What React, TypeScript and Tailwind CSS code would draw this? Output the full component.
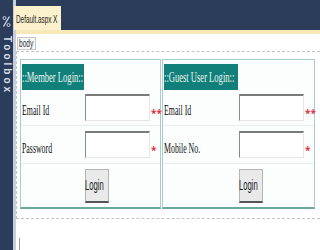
import React from "react";

const serif = "font-['Liberation_Serif',serif]";

function Sq({ children, className = "" }: { children: React.ReactNode; className?: string }) {
  // the screenshot is squeezed sideways, so the text is too
  return (
    <span className={`inline-block origin-left whitespace-nowrap ${className}`}>
      {children}
    </span>
  );
}

function Field({ stars }: { stars: string }) {
  return (
    <>
      <div className="h-[27px] border-t-2 border-l border-t-[#7a7a7a] border-l-[#8a8a8a] border-r border-b border-r-[#e6e6e6] border-b-[#e6e6e6] bg-white" />
      <div className="flex items-center pl-[1px] pt-[6px] text-[10px] font-bold leading-none text-[#e0313d]">
        {stars}
      </div>
    </>
  );
}

function LoginTable({
  title,
  labels,
  cols,
  headW,
  btnPad,
}: {
  title: string;
  labels: [string, string];
  cols: string;
  headW: string;
  btnPad: string;
}) {
  return (
    <div className="flex h-[150px] flex-col border border-[#a9cdc7] border-b-2 border-b-[#6aa79d] bg-[#fcfefe]">
      <div className="h-[33px] pl-[1px] pt-[4px]">
        <div className={`${headW} flex h-[26px] items-center bg-[#12807a] text-[15px] text-[#e9f5f1] ${serif}`}>
          <Sq className="scale-x-[0.57]">{title}</Sq>
        </div>
      </div>
      <div className={`grid h-[33px] ${cols} border-b border-[#e8efef] pl-[1px] pt-[1px]`}>
        <div className={`flex items-center pt-[2px] text-[14px] text-[#111] ${serif}`}>
          <Sq className="scale-x-[0.56]">{labels[0]}</Sq>
        </div>
        <Field stars="**" />
      </div>
      <div className={`grid h-[38px] ${cols} border-b border-[#e8efef] pl-[1px] pt-[5px]`}>
        <div className={`flex items-center pt-[2px] text-[14px] text-[#111] ${serif}`}>
          <Sq className="scale-x-[0.56]">{labels[1]}</Sq>
        </div>
        <Field stars="*" />
      </div>
      <div className={`flex flex-1 pt-[5px] ${btnPad}`}>
        <button className="flex h-[34px] w-[24px] items-center justify-center border border-[#b4b4b4] border-b-2 border-b-[#555] bg-[#e9e9e9] text-[14px] text-[#222] font-['Liberation_Sans',sans-serif]">
          <Sq className="translate-x-[5px] scale-x-[0.55]">Login</Sq>
        </button>
      </div>
    </div>
  );
}

export default function App() {
  return (
    <div className="flex h-[250px] w-[320px] overflow-hidden bg-white">
      {/* toolbox strip */}
      <div className="flex w-[13px] flex-col items-center bg-[#2c3d5b] pt-[15px]">
        <svg width="9" height="13" viewBox="0 0 9 13" className="text-[#c9d2e0]">
          <path d="M7.5 1.5 L1.5 11.5" stroke="currentColor" strokeWidth="1.4" />
          <circle cx="2.5" cy="3" r="1.5" fill="none" stroke="currentColor" strokeWidth="1" />
          <circle cx="6.5" cy="10" r="1.5" fill="none" stroke="currentColor" strokeWidth="1" />
        </svg>
        <div className="mt-[8px] text-[10px] font-bold leading-none tracking-[3px] text-[#d7deea] [writing-mode:vertical-rl] font-['Liberation_Sans',sans-serif]">
          Toolbox
        </div>
      </div>
      <div className="w-[3px] bg-[#c4cedc]" />

      <div className="flex flex-1 flex-col">
        <div className="flex h-[33px] items-end bg-[#2c3d5b]">
          <div className="-ml-[2px] flex h-[24px] w-[47px] items-center bg-[#fbf1cc] pl-[2px] pt-[2px] text-[11px] text-[#222] font-['Liberation_Sans',sans-serif]">
            <span className="w-[37px]">
              <Sq className="scale-x-[0.58]">Default.aspx</Sq>
            </span>
            <Sq className="scale-x-[0.6]">X</Sq>
          </div>
        </div>
        <div className="h-[4px] bg-[#f7e8b8]" />

        <div className="flex flex-1 flex-col bg-white">
          <div className="pl-[1px] pt-[3px]">
            <div className="flex h-[13px] w-[19px] items-center border border-[#c8c8c8] bg-[#f7f7f7] pl-[1px] text-[11px] text-[#333] font-['Liberation_Sans',sans-serif]">
              <Sq className="scale-x-[0.6]">body</Sq>
            </div>
          </div>

          <div className="mt-[1px] flex h-[168px] gap-[1px] border-y border-l border-dashed border-[#c4c4c4] pl-[3px] pt-[7px]">
            <div className="w-[141px]">
              <LoginTable
                title="::Member Login::"
                labels={["Email Id", "Password"]}
                cols="grid-cols-[63px_65px_1fr]"
                headW="w-[62px]"
                btnPad="pl-[64px]"
              />
            </div>
            <div className="w-[153px]">
              <LoginTable
                title="::Guest User Login::"
                labels={["Email Id", "Mobile No."]}
                cols="grid-cols-[75px_65px_1fr]"
                headW="w-[74px]"
                btnPad="pl-[76px]"
              />
            </div>
          </div>

          <div className="mt-[19px] ml-[3px] h-[12px] w-[1px] bg-[#9a9a9a]" />
        </div>
      </div>
    </div>
  );
}
